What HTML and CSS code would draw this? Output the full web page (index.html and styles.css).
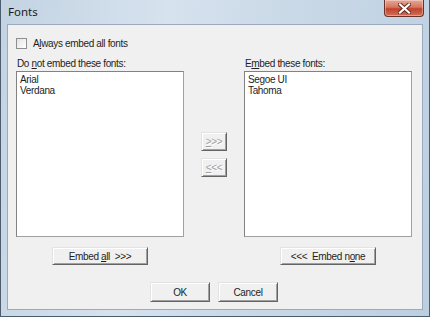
FILE: index.html
```html
<!DOCTYPE html>
<html lang="en">
<head>
  <meta charset="UTF-8">
  <title>Fonts</title>
  <link rel="stylesheet" href="styles.css">
</head>
<body>
  <div class="window">
    <div class="title-bar">
      <div class="title">Fonts</div>
      <button class="close-btn">
        <svg width="13" height="11" viewBox="0 0 13 11">
          <path d="M2 1.5 L11 9.5 M11 1.5 L2 9.5" stroke="#5b2a20" stroke-width="4" stroke-linecap="square"/>
          <path d="M2 1.5 L11 9.5 M11 1.5 L2 9.5" stroke="#fff" stroke-width="2.2" stroke-linecap="square"/>
        </svg>
      </button>
    </div>
    <div class="client">
      <label class="check-row">
        <span class="checkbox"></span>
        <span>A<u>l</u>ways embed all fonts</span>
      </label>

      <div class="lists">
        <div class="list-col">
          <div class="list-label">Do <u>n</u>ot embed these fonts:</div>
          <div class="listbox">
            <div>Arial</div>
            <div>Verdana</div>
          </div>
          <button class="btn btn-wide">Embed <u>a</u>ll&nbsp;&nbsp;&gt;&gt;&gt;</button>
        </div>

        <div class="move-col">
          <button class="btn btn-small" disabled><u>&gt;</u>&gt;&gt;</button>
          <button class="btn btn-small" disabled><u>&lt;</u>&lt;&lt;</button>
        </div>

        <div class="list-col">
          <div class="list-label">E<u>m</u>bed these fonts:</div>
          <div class="listbox">
            <div>Segoe UI</div>
            <div>Tahoma</div>
          </div>
          <button class="btn btn-wide">&lt;&lt;&lt;&nbsp;&nbsp;Embed n<u>o</u>ne</button>
        </div>
      </div>

      <div class="dialog-buttons">
        <button class="btn btn-dialog">OK</button>
        <button class="btn btn-dialog">Cancel</button>
      </div>
    </div>
  </div>
</body>
</html>
```

FILE: styles.css
```css
body {
  margin: 0;
  font-family: 'Liberation Sans', Arial, sans-serif;
  font-size: 10px;
  letter-spacing: -0.35px;
  color: #1e1e1e;
}

.window {
  width: 430px;
  height: 317px;
  box-sizing: border-box;
  display: flex;
  flex-direction: column;
  background: linear-gradient(100deg, #c3d3e2 0%, #d6e2ee 35%, #cad9e7 60%, #bccfe1 100%);
  border-left: 1px solid #4d5d70;
  border-right: 1px solid #4d5d70;
  border-bottom: 1px solid #4d5d70;
}

.title-bar {
  height: 24px;
  display: flex;
  justify-content: space-between;
  align-items: flex-start;
  flex-shrink: 0;
}

.title {
  font-family: 'Noto Sans', sans-serif;
  font-size: 11.5px;
  letter-spacing: 0;
  color: #1a1a1a;
  padding: 4px 0 0 7px;
}

.close-btn {
  width: 40px;
  height: 17px;
  margin: 0 5px 0 0;
  padding: 0;
  border: 1px solid #6b3026;
  border-top: none;
  border-radius: 0 0 4px 4px;
  background: linear-gradient(180deg, #e8a796 0%, #d6765f 45%, #c2412a 55%, #d0705a 100%);
  display: flex;
  align-items: center;
  justify-content: center;
  box-shadow: inset 0 0 0 1px rgba(255, 255, 255, 0.35);
}

.client {
  flex: 1;
  margin: 0 6px 6px 6px;
  padding: 0 10px 0 8px;
  background-color: #f0f0f0;
  border: 1px solid #9aa9bb;
  display: flex;
  flex-direction: column;
}

.check-row {
  display: flex;
  align-items: center;
  gap: 6px;
  margin-top: 13px;
  height: 11px;
}

.checkbox {
  width: 9px;
  height: 9px;
  border: 1px solid #8e8f8f;
  background: linear-gradient(135deg, #e4e4e4, #ffffff);
}

.lists {
  display: flex;
  margin-top: 8px;
}

.list-col {
  width: 168px;
  display: flex;
  flex-direction: column;
  align-items: center;
}

.list-label {
  align-self: flex-start;
  line-height: 13px;
  margin: 0 0 1px 1px;
}

.listbox {
  width: 168px;
  height: 166px;
  box-sizing: border-box;
  background: #fff;
  border: 1px solid #a0a0a0;
  border-top-color: #828282;
  border-left-color: #828282;
  padding: 2px 3px;
  line-height: 11px;
}

.move-col {
  width: 62px;
  display: flex;
  flex-direction: column;
  align-items: center;
  gap: 7px;
  padding-top: 75px;
}

.btn {
  font-family: 'Liberation Sans', Arial, sans-serif;
  font-size: 10px;
  letter-spacing: -0.35px;
  color: #1e1e1e;
  background: #f0f0f0;
  border: 1px solid;
  border-color: #e3e3e3 #646464 #646464 #e3e3e3;
  box-shadow: inset 1px 1px 0 #ffffff, inset -1px -1px 0 #a0a0a0;
  padding: 0;
  box-sizing: border-box;
}

.btn:disabled {
  color: #a0a0a0;
  text-shadow: 1px 1px 0 #ffffff;
}

.btn-small {
  width: 26px;
  height: 19px;
}

.btn-wide {
  width: 96px;
  height: 18px;
  margin-top: 10px;
}

.dialog-buttons {
  display: flex;
  justify-content: center;
  gap: 8px;
  margin-top: 17px;
}

.btn-dialog {
  width: 60px;
  height: 20px;
}
```
